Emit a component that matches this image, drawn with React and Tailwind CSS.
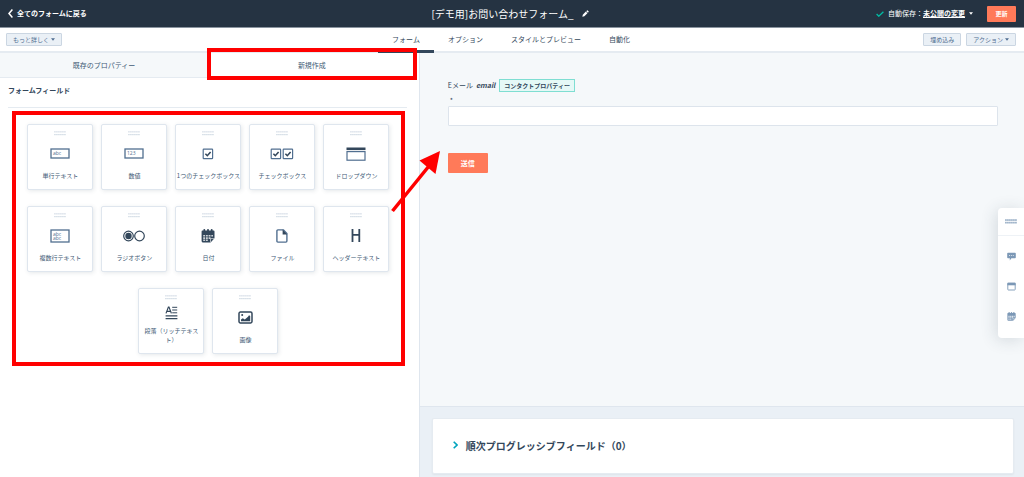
import { useState } from "react";

const navTabs = ["フォーム", "オプション", "スタイルとプレビュー", "自動化"];

function Dots() {
  return (
    <svg width="12" height="5" viewBox="0 0 12 5" fill="#b9c7d6">
      {[0, 1, 2, 3, 4, 5].map((i) => (
        <g key={i}>
          <rect x={i * 2 + 0.4} y="0.3" width="1.1" height="1.1" />
          <rect x={i * 2 + 0.4} y="3.1" width="1.1" height="1.1" />
        </g>
      ))}
    </svg>
  );
}

function Caret() {
  return (
    <svg width="4" height="3" viewBox="0 0 4 3" fill="currentColor">
      <path d="M0 .3h4L2 2.7z" />
    </svg>
  );
}

function BoxedText({ lines, height }) {
  return (
    <svg width="20" height={height} fill="none">
      <rect x="1" y="1" width="18" height={height - 2} stroke="#516f90" strokeWidth="1.3" />
      {lines.map((t, i) => (
        <text key={i} x="3" y={7 + i * 4} fontSize="5" fill="#516f90" fontFamily="Open Sans, sans-serif">
          {t}
        </text>
      ))}
    </svg>
  );
}

function Check({ count }) {
  return (
    <svg width={count * 12} height="12" fill="none">
      {Array.from({ length: count }, (_, i) => (
        <g key={i} transform={`translate(${i * 12} 0)`}>
          <rect x="1.2" y="1.2" width="9.4" height="9.4" rx=".6" stroke="#516f90" strokeWidth="1.2" />
          <path d="M3.4 5.8l1.9 1.9 3.3-3.7" stroke="#33475b" strokeWidth="1.6" />
        </g>
      ))}
    </svg>
  );
}

function DropdownIcon() {
  return (
    <svg width="20" height="14" fill="none">
      <rect x=".5" y=".5" width="19" height="2.6" fill="#33475b" />
      <rect x="1" y="4.6" width="18" height="8.6" stroke="#516f90" strokeWidth="1.2" />
    </svg>
  );
}

function RadioIcon() {
  return (
    <svg width="22" height="12" fill="none" stroke="#33475b">
      <circle cx="5.5" cy="6" r="4.8" strokeWidth="1.2" />
      <circle cx="5.5" cy="6" r="3.2" fill="#33475b" stroke="none" />
      <circle cx="16.5" cy="6" r="4.8" strokeWidth="1.2" />
    </svg>
  );
}

function CalendarIcon({ size = 14, color = "#33475b" }) {
  return (
    <svg width={size} height={size} viewBox="0 0 14 14" fill={color}>
      <rect x="2.4" y="0" width="1.8" height="3" rx=".8" />
      <rect x="6.1" y="0" width="1.8" height="3" rx=".8" />
      <rect x="9.8" y="0" width="1.8" height="3" rx=".8" />
      <path d="M1.4 1.6h11.2q.9 0 .9.9v6.8L9.6 13.6H2.2Q.6 13.6.6 12V2.5q0-.9.8-.9z" />
      <path d="M2.2 6h1.9v1.6H2.2zM4.9 6h1.9v1.6H4.9zM7.6 6h1.9v1.6H7.6zM10.3 6h1.7v1.6h-1.7zM2.2 8.3h1.9v1.6H2.2zM4.9 8.3h1.9v1.6H4.9zM7.6 8.3h1.9v1.6H7.6zM2.2 10.6h1.9v1.4H2.2zM4.9 10.6h1.9v1.4H4.9z" fill="#fff" opacity=".75" />
      <path d="M9.5 13.3V9.6h3.8" stroke="#fff" strokeWidth=".6" fill="none" />
    </svg>
  );
}

function FileIcon() {
  return (
    <svg width="12" height="14" fill="none">
      <path d="M1.9.9h5.6L10.9 4.5v7.6q0 1-1 1H1.9q-1 0-1-1V1.9q0-1 1-1z" stroke="#516f90" strokeWidth="1.4" />
      <path d="M6.6.6v4.8h4.6z" fill="#33475b" />
    </svg>
  );
}

function HeadingIcon() {
  return (
    <svg width="10" height="16" fill="#33475b">
      <path d="M.6 1h1.8v5h5V1h1.8v13H7.4V7.8h-5V14H.6z" />
    </svg>
  );
}

function ParagraphIcon() {
  return (
    <svg width="13" height="14" fill="none" stroke="#33475b">
      <path d="M1 7.4L3.4 1h.6l2.4 6.4M1.9 5.3h3.6" strokeWidth="1.2" />
      <path d="M7.2 1.3h5M7.2 4h5M7.2 6.8h5" strokeWidth="1" />
      <path d="M.6 9.8h11.8M.6 12.7h11.8" strokeWidth="1.3" />
    </svg>
  );
}

function ImageIcon() {
  return (
    <svg width="15" height="13" fill="none">
      <rect x="1" y="1" width="13" height="11" rx="1.4" stroke="#33475b" strokeWidth="1.5" />
      <circle cx="4.2" cy="4" r="1" fill="#33475b" />
      <path d="M3 10.2V8.6l1.8-1.4 2 1.2 3.2-2.6 1-1.6L12.2 5v5.2z" fill="#33475b" />
    </svg>
  );
}

const fieldTypes = [
  { label: "単行テキスト", icon: <BoxedText lines={["abc"]} height={11} /> },
  { label: "数値", icon: <BoxedText lines={["123"]} height={11} /> },
  { label: "1つのチェックボックス", icon: <Check count={1} /> },
  { label: "チェックボックス", icon: <Check count={2} /> },
  { label: "ドロップダウン", icon: <DropdownIcon /> },
  { label: "複数行テキスト", icon: <BoxedText lines={["abc", "abc"]} height={14} /> },
  { label: "ラジオボタン", icon: <RadioIcon /> },
  { label: "日付", icon: <CalendarIcon /> },
  { label: "ファイル", icon: <FileIcon /> },
  { label: "ヘッダーテキスト", icon: <HeadingIcon /> },
  { label: "段落（リッチテキスト）", icon: <ParagraphIcon />, wrap: true },
  { label: "画像", icon: <ImageIcon /> },
];

function Header() {
  return (
    <header className="grid h-7 grid-cols-[1fr_auto_1fr] items-center border-b border-[#8a949f] bg-[#253342] px-2 text-white">
      <a href="#forms" className="flex items-center gap-1 text-[7px] font-bold">
        <svg width="5" height="9" viewBox="0 0 5 9" fill="none" stroke="#fff" strokeWidth="1.5">
          <path d="M4.4.6L1 4.5l3.4 3.9" />
        </svg>
        全てのフォームに戻る
      </a>
      <div className="mr-1 flex items-center gap-2">
        <h1 className="text-[10px] leading-4">[デモ用]お問い合わせフォーム_</h1>
        <button aria-label="名前を編集">
          <svg width="7" height="7" viewBox="0 0 8 8" fill="#fff">
            <path d="M.4 7.6l.5-2.3L4.4 1.8l1.8 1.8-3.5 3.5zM4.9 1.3L5.7.5q.4-.3.8 0l1 1q.3.4 0 .8l-.8.8z" />
          </svg>
        </button>
      </div>
      <div className="flex items-center justify-end text-[7px]">
        <svg width="8" height="6" viewBox="0 0 8 6" fill="none" stroke="#00bda5" strokeWidth="1.3">
          <path d="M.6 3l2.2 2.2L7.4.7" />
        </svg>
        <span className="ml-1">自動保存：</span>
        <button className="flex items-center gap-1 font-bold">
          <span className="underline">未公開の変更</span>
          <Caret />
        </button>
        <button className="ml-3.5 h-4 w-[29px] rounded-[1px] bg-[#ff7a59] text-[6px] font-bold">更新</button>
      </div>
    </header>
  );
}

function SmallButton({ children }) {
  return (
    <button className="flex h-[13px] items-center gap-0.5 rounded-[1px] border border-[#cbd6e2] bg-[#eaf0f6] px-1.5 text-[6px] text-[#506e91]">
      {children}
    </button>
  );
}

function SubHeader() {
  const [active, setActive] = useState("フォーム");

  return (
    <div className="grid h-[25px] grid-cols-[1fr_auto_1fr] border-b-2 border-[#e5ebf1] bg-white px-2 pl-1.5">
      <div className="flex items-center">
        <SmallButton>
          もっと詳しく
          <Caret />
        </SmallButton>
      </div>
      <nav className="-mb-0.5 flex text-[7px]">
        {navTabs.map((t) => (
          <button
            key={t}
            onClick={() => setActive(t)}
            className={`border-b-[3px] px-3.5 ${active === t ? "border-[#33475b]" : "border-transparent"}`}
          >
            {t}
          </button>
        ))}
      </nav>
      <div className="flex items-center justify-end gap-[5px]">
        <SmallButton>埋め込み</SmallButton>
        <SmallButton>
          アクション
          <Caret />
        </SmallButton>
      </div>
    </div>
  );
}

function FieldCard({ label, icon, wrap }) {
  return (
    <button className="flex h-[66px] w-[66px] flex-col items-center rounded-[2px] border border-[#dfe6ee] bg-white pt-1.5 pb-[9px] text-[#425b76] shadow-[1px_1px_4px_rgba(45,62,80,0.12)]">
      <Dots />
      <span className="flex flex-1 items-center">{icon}</span>
      <span className="flex w-full justify-center text-center text-[6px] leading-[9px]">
        <span className={wrap ? "px-1" : "whitespace-nowrap"}>{label}</span>
      </span>
    </button>
  );
}

function LeftPanel() {
  return (
    <aside className="w-[41%] shrink-0 border-r border-[#dfe6ee] bg-white">
      <div className="mr-[3px] flex h-[25px] text-[7px] text-[#425b76]">
        <button className="flex-1 border-b border-[#e5ebf1] bg-[#f5f8fa]">既存のプロパティー</button>
        <div className="relative flex flex-1">
          <button className="flex-1 bg-white">新規作成</button>
          <div className="pointer-events-none absolute -top-[5px] -right-px -bottom-[2px] -left-px z-10 border-4 border-[#ff0000]" />
        </div>
      </div>
      <div className="mr-3 ml-2 border-b border-[#e5ebf1] pt-1.5 pb-[11px]">
        <h2 className="text-[7px] leading-3 font-bold">フォームフィールド</h2>
      </div>
      <div className="relative mt-[3px] mr-3.5 ml-3 border-4 border-[#ff0000] pt-[9px] pb-2">
        <div className="flex flex-wrap justify-center gap-x-2 gap-y-4">
          {fieldTypes.map((f) => (
            <FieldCard key={f.label} label={f.label} icon={f.icon} wrap={f.wrap} />
          ))}
        </div>
        <svg className="absolute top-9 -right-10 z-10" width="50" height="62" viewBox="0 0 50 62">
          <path d="M1.5 60L38 15" stroke="#f00" strokeWidth="3.5" />
          <path d="M49 0L28.5 9.5 44.5 23z" fill="#f00" />
        </svg>
      </div>
    </aside>
  );
}

function Preview() {
  return (
    <main className="flex min-w-0 flex-1 flex-col bg-[#f5f8fa]">
      <form className="flex-1 pt-[26px] pr-[26px] pb-8 pl-7" onSubmit={(e) => e.preventDefault()}>
        <label htmlFor="email" className="block text-[7px]">
          <span className="flex h-[13px] items-center">
            Eメール
            <em className="ml-[3px] font-bold">email</em>
            <span className="ml-1 flex h-[13px] items-center border border-[#7fded2] bg-[#e5f8f6] px-1 text-[6px] font-bold">
              コンタクトプロパティー
            </span>
          </span>
          <span className="block pt-0.5 pl-0.5 leading-3">*</span>
        </label>
        <input
          id="email"
          type="email"
          className="block h-5 w-full rounded-[1px] border border-[#dde4ec] bg-white px-2 text-[7px] outline-none"
        />
        <button className="mt-[27px] h-5 w-10 rounded-[1px] bg-[#ff7a59] text-[7px] font-bold text-white">送信</button>
      </form>
      <section className="border-t border-[#dfe6ee] bg-[#eaf0f6] pt-[11px] pr-2.5 pb-[3px] pl-3">
        <button className="flex h-14 w-full items-center gap-2 rounded-[2px] border border-[#e5ebf1] bg-white px-5 pb-0.5 text-[10px] font-bold shadow-xs">
          <svg width="5" height="8" viewBox="0 0 5 8" fill="none" stroke="#00a4bd" strokeWidth="1.6">
            <path d="M.7.7L4 4 .7 7.3" />
          </svg>
          順次プログレッシブフィールド（0）
        </button>
      </section>
    </main>
  );
}

function SideTools() {
  return (
    <div className="absolute top-[208px] right-0 flex w-[26px] flex-col items-center rounded-l-[4px] bg-white shadow-[-2px_2px_16px_rgba(45,62,80,0.16)]">
      <button aria-label="メニュー" className="flex h-7 w-full items-center justify-center border-b border-[#eef2f6]">
        <svg width="12" height="5" viewBox="0 0 12 5" fill="#7c98b6">
          {[0, 1, 2, 3, 4, 5].map((i) => (
            <g key={i}>
              <rect x={i * 2 + 0.3} y="0.2" width="1.3" height="1.7" />
              <rect x={i * 2 + 0.3} y="2.8" width="1.3" height="1.7" />
            </g>
          ))}
        </svg>
      </button>
      <div className="flex flex-col items-center gap-[21px] pt-4 pb-[17px]">
        <button aria-label="チャット">
          <svg width="9" height="9" viewBox="0 0 9 9" fill="#7c98b6">
            <path d="M1 .8h7q.8 0 .8.8v3.8q0 .8-.8.8H4.4L2.8 8.4V6.2H1q-.8 0-.8-.8V1.6Q.2.8 1 .8z" />
            <path d="M2 3.5h5" stroke="#fff" strokeWidth=".7" strokeDasharray="1 .9" />
          </svg>
        </button>
        <button aria-label="ポップアップ">
          <svg width="9" height="9" viewBox="0 0 9 9" fill="none">
            <rect x=".8" y="1.2" width="7.4" height="6.8" rx=".6" stroke="#7c98b6" strokeWidth=".9" />
            <path d="M.4.8h8.2v2.5H.4z" fill="#7c98b6" />
          </svg>
        </button>
        <button aria-label="カレンダー">
          <CalendarIcon size={9} color="#7c98b6" />
        </button>
      </div>
    </div>
  );
}

export default function App() {
  return (
    <div
      lang="ja"
      className="relative flex min-h-screen flex-col overflow-hidden bg-white font-['Noto_Sans_CJK_JP',sans-serif] text-[#33475b] [&_button>svg]:block"
    >
      <Header />
      <SubHeader />
      <div className="flex flex-1">
        <LeftPanel />
        <Preview />
      </div>
      <SideTools />
    </div>
  );
}
